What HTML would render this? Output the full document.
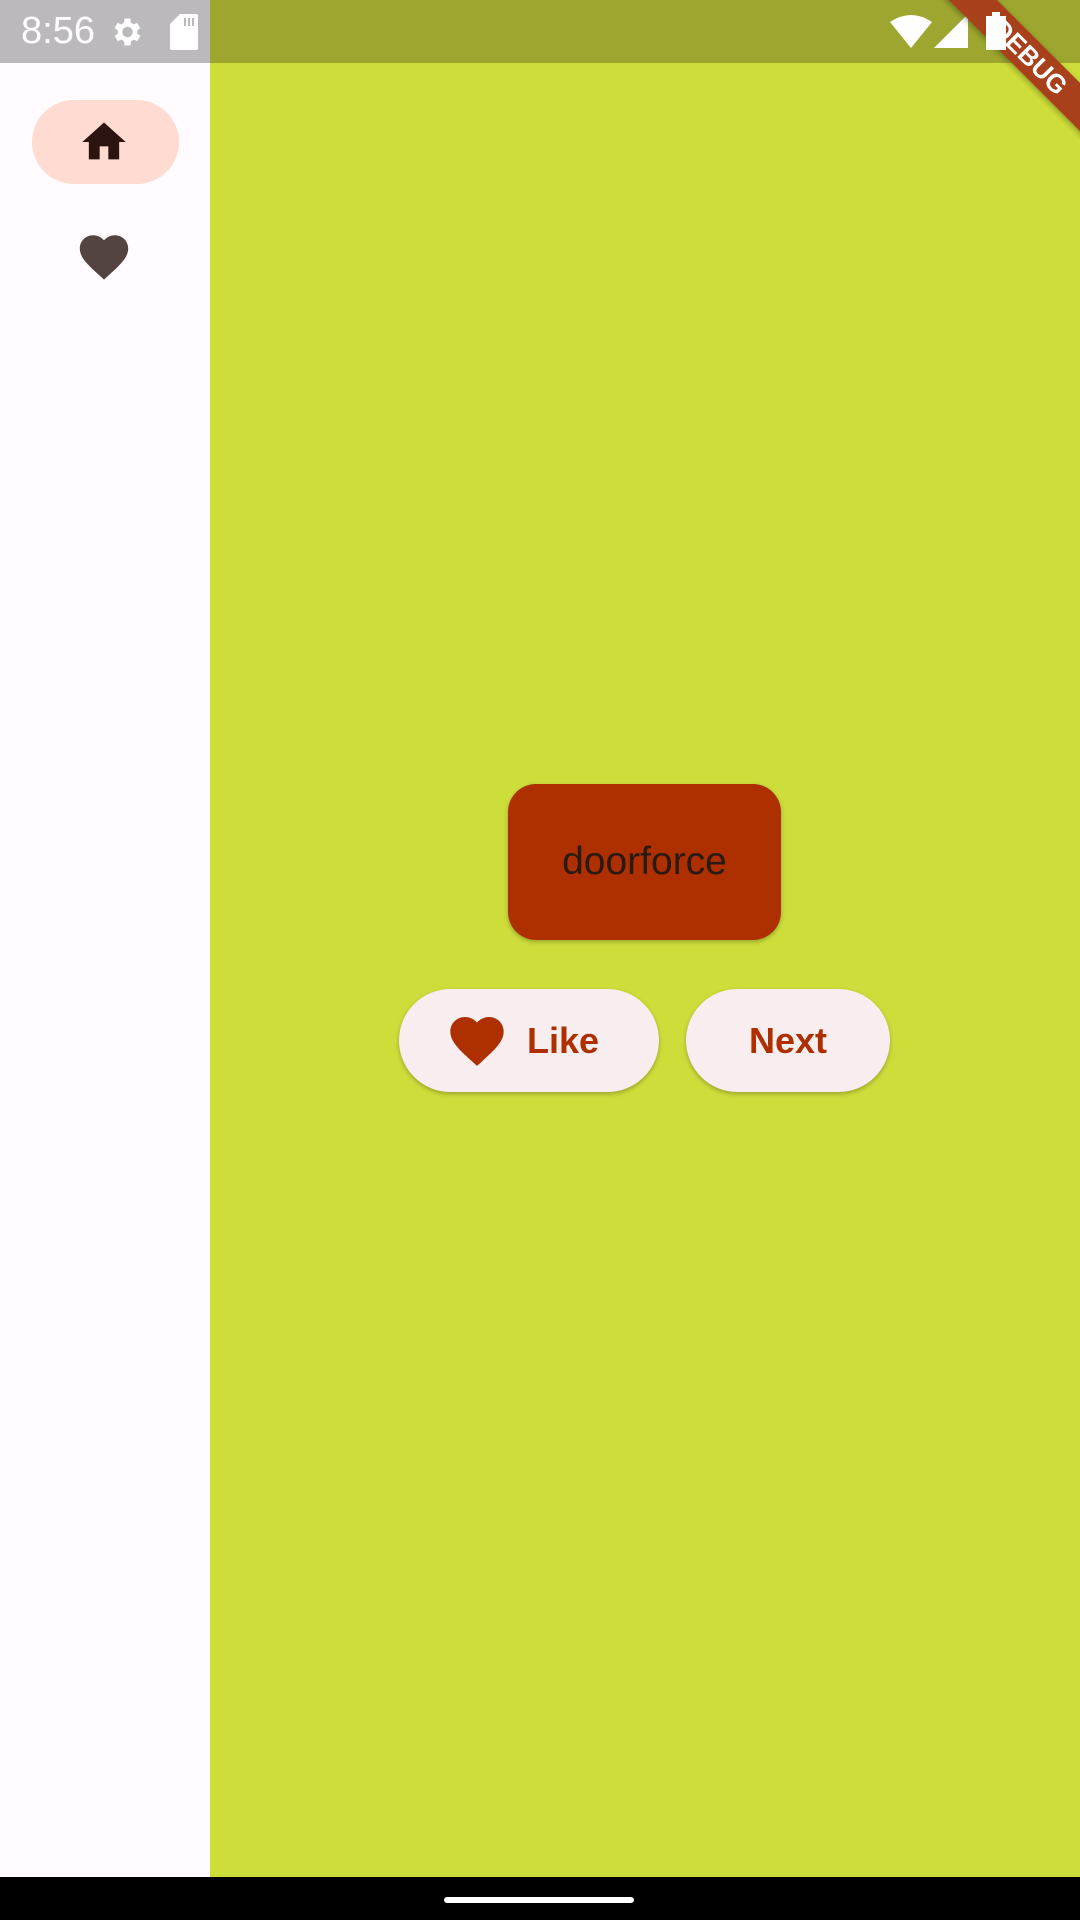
<!DOCTYPE html>
<html><head><meta charset="utf-8"><style>
html,body{margin:0;padding:0;width:1080px;height:1920px;overflow:hidden;font-family:"Liberation Sans",sans-serif}
.main{position:absolute;left:0;top:0;width:1080px;height:1877px;background:#cddd3a}
.rail{position:absolute;left:0;top:0;width:210px;height:1877px;background:#fffbfe}
.sb{position:absolute;top:0;height:63px}
.card{position:absolute;left:508px;top:784px;width:273px;height:156px;background:#ae2f00;border-radius:28px;box-shadow:0 2px 4px rgba(0,0,0,.25);display:flex;align-items:center;justify-content:center;font-size:39px;color:#2a1a14}
.btn{position:absolute;top:989px;height:103px;border-radius:52px;background:#f8eef0;box-shadow:0 2px 4px rgba(0,0,0,.25);display:flex;align-items:center;justify-content:center;font-size:36px;font-weight:bold;color:#ae2f00}
.nav{position:absolute;left:0;top:1877px;width:1080px;height:43px;background:#000}
</style></head><body>
<div class="main"></div>
<div class="rail"></div>
<div class="sb" style="left:0;width:210px;background:#bbb9bc"></div>
<div class="sb" style="left:210px;width:870px;background:#9da62e"></div>
<div style="position:absolute;left:21px;top:10px;color:#fff;font-size:38px">8:56</div>
<svg style="position:absolute;left:108px;top:14px" width="36" height="36" viewBox="0 0 24 24"><path fill="#fff" d="M19.4 13a7.5 7.5 0 0 0 0-2l2.1-1.6-2-3.5-2.5 1a7 7 0 0 0-1.7-1L15 3h-4l-.4 2.9a7 7 0 0 0-1.7 1l-2.5-1-2 3.5L6.6 11a7.5 7.5 0 0 0 0 2l-2.1 1.6 2 3.5 2.5-1a7 7 0 0 0 1.7 1L11 21h4l.4-2.9a7 7 0 0 0 1.7-1l2.5 1 2-3.5zM13 15.5a3.5 3.5 0 1 1 0-7 3.5 3.5 0 0 1 0 7z"/></svg>
<svg style="position:absolute;left:170px;top:14px" width="28" height="36" viewBox="0 0 14 18"><path fill="#fff" d="M5 0h8a1 1 0 0 1 1 1v16a1 1 0 0 1-1 1H1a1 1 0 0 1-1-1V5z"/><path fill="#bbb9bc" d="M7 2h1v4H7zM9 2h1v4H9zM11 2h1v4h-1z"/></svg>
<svg style="position:absolute;left:890px;top:14px" width="42" height="34" viewBox="0 0 42 34"><path fill="#fff" d="M0 8Q21-6 42 8L21 34z"/></svg>
<svg style="position:absolute;left:934px;top:14px" width="34" height="34"><path fill="#fff" d="M34 0V34H0z"/></svg>
<div style="position:absolute;left:32px;top:100px;width:147px;height:84px;border-radius:42px;background:#ffdbd1"></div>
<svg style="position:absolute;left:78px;top:116px" width="52" height="52" viewBox="0 0 24 24"><path fill="#2c1410" d="M10 20v-6h4v6h5v-8h3L12 3 2 12h3v8z"/></svg>
<svg style="position:absolute;left:75px;top:228px" width="58" height="58" viewBox="0 0 24 24"><path fill="#534341" d="M12 21.35l-1.45-1.32C5.4 15.36 2 12.28 2 8.5 2 5.42 4.42 3 7.5 3c1.74 0 3.41.81 4.5 2.09C13.09 3.81 14.76 3 16.5 3 19.58 3 22 5.42 22 8.5c0 3.78-3.4 6.86-8.55 11.54z"/></svg>
<div class="card">doorforce</div>
<div class="btn" style="left:399px;width:260px"><svg width="64" height="64" viewBox="0 0 24 24" style="margin-right:18px;margin-left:-14px"><path fill="#ae2f00" d="M12 21.35l-1.45-1.32C5.4 15.36 2 12.28 2 8.5 2 5.42 4.42 3 7.5 3c1.74 0 3.41.81 4.5 2.09C13.09 3.81 14.76 3 16.5 3 19.58 3 22 5.42 22 8.5c0 3.78-3.4 6.86-8.55 11.54z"/></svg>Like</div>
<div class="btn" style="left:686px;width:204px">Next</div>
<div style="position:absolute;left:900px;top:40px;width:260px;height:34px;background:#a8401c;transform:rotate(45deg);transform-origin:center;color:#fff;font-weight:bold;font-size:26px;text-align:center;line-height:34px;box-shadow:0 2px 6px rgba(0,0,0,.3)">DEBUG</div>
<svg style="position:absolute;left:986px;top:12px" width="20" height="38"><path fill="#fff" d="M6 0h8v4h6v34H0V4h6z"/></svg>
<div class="nav"></div>
<div style="position:absolute;left:444px;top:1897px;width:190px;height:6px;border-radius:3px;background:#fff"></div>
</body></html>
